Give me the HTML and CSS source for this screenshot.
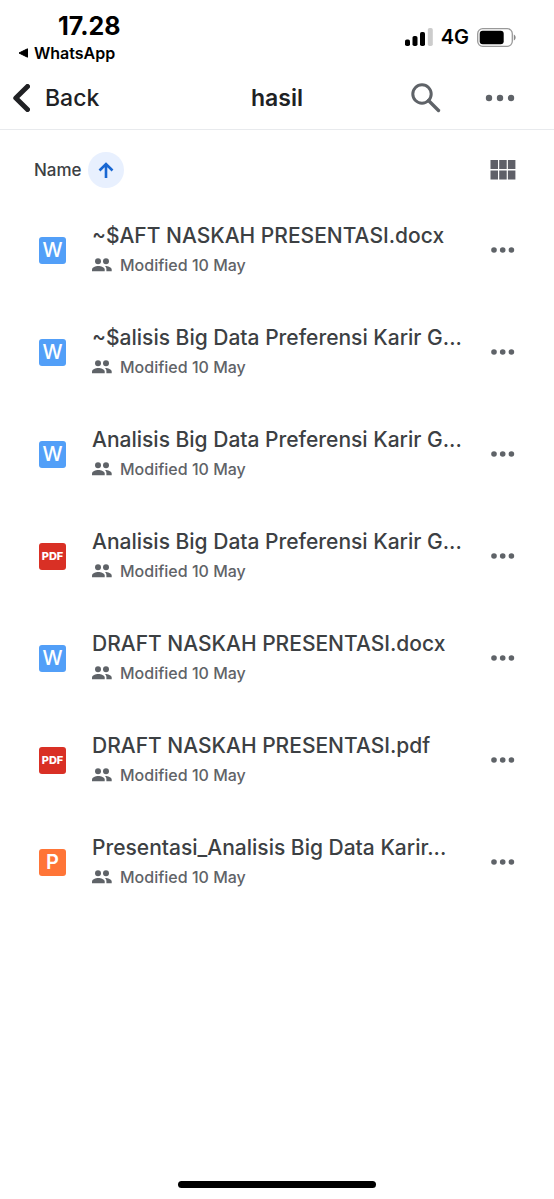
FILE: index.html
```html
<!DOCTYPE html>
<html lang="id">
<head>
<meta charset="utf-8">
<meta name="viewport" content="width=device-width, initial-scale=1">
<title>hasil</title>
<link rel="stylesheet" href="styles.css">
</head>
<body>
<svg class="sprite" aria-hidden="true">
  <symbol id="dots" viewBox="0 0 24 6"><circle cx="3" cy="3" r="2.8"/><circle cx="11.7" cy="3" r="2.8"/><circle cx="20.4" cy="3" r="2.8"/></symbol>
  <symbol id="people" viewBox="0 0 20 14"><circle cx="6" cy="3.2" r="3"/><circle cx="14" cy="3.2" r="3"/><path d="M0 13.2v-1.7C0 9.200 3.600 8 6.300 8s6.400 1.200 6.400 3.500v1.700z"/><path d="M13 8.100c3 .1 6.700 1.200 6.700 3.400v1.700h-5.300v-1.700c0-1.500-.5-2.600-1.400-3.400z"/></symbol>
</svg>
<div class="screen">
  <div class="status">
    <div class="status-left">
      <div class="clock">17.28</div>
      <a class="return" href="#"><svg width="10" height="10" viewBox="0 0 10 10"><path d="M9.500.8v8.400L1 5z" stroke="#000" stroke-linejoin="round"/></svg>WhatsApp</a>
    </div>
    <div class="status-right">
      <svg width="28" height="18" viewBox="0 0 28 18"><rect x="0" y="11.500" width="5" height="6.500" rx="1.800"/><rect x="7.500" y="8" width="5" height="10" rx="1.800"/><rect x="15" y="4" width="5" height="14" rx="1.800"/><rect x="22.800" y="0" width="5" height="18" rx="1.800" fill="#ccc"/></svg>
      <span class="network">4G</span>
      <svg width="39" height="19" viewBox="0 0 39 19"><rect x=".7" y=".7" width="34.600" height="17.600" rx="5" fill="none" stroke="#999" stroke-width="1.300"/><rect x="2.700" y="2.700" width="24" height="13.600" rx="3"/><path d="M36.800 6.500c2.400 1 2.400 5 0 6z" fill="#888"/></svg>
    </div>
  </div>
  <header class="nav">
    <button class="back" type="button"><svg width="18" height="28" viewBox="0 0 18 28"><path d="M15.500 2.500 3.800 14l11.700 11.500" fill="none" stroke="#202124" stroke-width="5" stroke-linecap="round" stroke-linejoin="round"/></svg>Back</button>
    <h1 class="title">hasil</h1>
    <div class="nav-actions">
      <button type="button" aria-label="Search"><svg width="30" height="30" viewBox="0 0 30 30" fill="none" stroke="#5f6368" stroke-width="3"><circle cx="11" cy="11" r="9.200"/><path d="m17.500 17.500 10 10" stroke-width="3.400" stroke-linecap="round"/></svg></button>
      <button type="button" aria-label="More actions"><svg width="30" height="8" viewBox="0 0 30 8" fill="#5f6368"><circle cx="4" cy="4" r="3.200"/><circle cx="15" cy="4" r="3.200"/><circle cx="26" cy="4" r="3.200"/></svg></button>
    </div>
  </header>
  <main>
    <div class="toolbar">
      <button class="sort" type="button">Name<span class="direction"><svg width="16" height="16" viewBox="0 0 16 16"><path d="M8 16V2M1.500 8.500 8 2l6.500 6.500" fill="none" stroke="#1967d2" stroke-width="2.600"/></svg></span></button>
      <button class="view" type="button" aria-label="Grid view"><svg width="26" height="20" viewBox="0 0 26 20" fill="#5f6068"><path d="M.5 0H8v9H.5zM9.200 0h7.500v9H9.200zM17.900 0h7.500v9h-7.500zM.5 10.500H8v9H.5zM9.200 10.500h7.500v9H9.200zM17.900 10.500h7.500v9h-7.500z"/></svg></button>
    </div>
    <ul class="files">
      <li class="file"><span class="kind word">W</span><div class="info"><div class="name">~$AFT NASKAH PRESENTASI.docx</div><div class="meta"><svg class="people"><use href="#people"/></svg>Modified 10 May</div></div><button class="more" type="button" aria-label="More"><svg><use href="#dots"/></svg></button></li>
      <li class="file"><span class="kind word">W</span><div class="info"><div class="name">~$alisis Big Data Preferensi Karir G...</div><div class="meta"><svg class="people"><use href="#people"/></svg>Modified 10 May</div></div><button class="more" type="button" aria-label="More"><svg><use href="#dots"/></svg></button></li>
      <li class="file"><span class="kind word">W</span><div class="info"><div class="name">Analisis Big Data Preferensi Karir G...</div><div class="meta"><svg class="people"><use href="#people"/></svg>Modified 10 May</div></div><button class="more" type="button" aria-label="More"><svg><use href="#dots"/></svg></button></li>
      <li class="file"><span class="kind pdf">PDF</span><div class="info"><div class="name">Analisis Big Data Preferensi Karir G...</div><div class="meta"><svg class="people"><use href="#people"/></svg>Modified 10 May</div></div><button class="more" type="button" aria-label="More"><svg><use href="#dots"/></svg></button></li>
      <li class="file"><span class="kind word">W</span><div class="info"><div class="name">DRAFT NASKAH PRESENTASI.docx</div><div class="meta"><svg class="people"><use href="#people"/></svg>Modified 10 May</div></div><button class="more" type="button" aria-label="More"><svg><use href="#dots"/></svg></button></li>
      <li class="file"><span class="kind pdf">PDF</span><div class="info"><div class="name">DRAFT NASKAH PRESENTASI.pdf</div><div class="meta"><svg class="people"><use href="#people"/></svg>Modified 10 May</div></div><button class="more" type="button" aria-label="More"><svg><use href="#dots"/></svg></button></li>
      <li class="file"><span class="kind slides">P</span><div class="info"><div class="name">Presentasi_Analisis Big Data Karir...</div><div class="meta"><svg class="people"><use href="#people"/></svg>Modified 10 May</div></div><button class="more" type="button" aria-label="More"><svg><use href="#dots"/></svg></button></li>
    </ul>
  </main>
  <div class="home"></div>
</div>
</body>
</html>
```
FILE: styles.css
```css
* { box-sizing: border-box; }
body { margin: 0; background: #fff; color: #3c4043; font-family: Inter, "Liberation Sans", sans-serif; }
button { display: flex; align-items: center; border: 0; padding: 0; background: none; color: inherit; font: inherit; cursor: pointer; }
svg { display: block; flex: none; }
.sprite { position: absolute; width: 0; height: 0; }
.screen { display: flex; flex-direction: column; min-height: 100vh; }

.status { display: flex; justify-content: space-between; padding: 12px 38px 0 18px; color: #000; }
.clock { padding-left: 40px; font-size: 25px; line-height: 28px; font-weight: 700; }
.return { display: flex; align-items: center; gap: 6px; color: #000; font-size: 16px; line-height: 26px; font-weight: 600; text-decoration: none; }
.status-right { display: flex; align-items: center; align-self: flex-start; gap: 8px; padding-top: 12px; }
.network { font-size: 20px; line-height: 26px; font-weight: 600; }

.nav { display: grid; grid-template-columns: 1fr auto 1fr; align-items: center; height: 64px; padding: 0 39px 0 12px; border-bottom: 1px solid #e8eaed; color: #202124; }
.back { gap: 15px; font-size: 23px; font-weight: 500; justify-self: start; }
.title { margin: 0; padding-left: 27px; font-size: 23px; font-weight: 600; }
.nav-actions { display: flex; align-items: center; justify-content: flex-end; gap: 44px; }

.toolbar { display: flex; align-items: center; justify-content: space-between; height: 80px; padding: 0 38px 0 34px; }
.sort { gap: 6px; font-size: 17px; font-weight: 500; }
.direction { display: grid; place-items: center; width: 36px; height: 36px; border-radius: 50%; background: #e8f0fe; }

.files { margin: -11px 0 0; padding: 0; list-style: none; }
.file { display: flex; align-items: center; height: 102px; padding: 0 39px; }
.kind { display: grid; place-items: center; flex: none; width: 27px; height: 27px; margin-right: 26px; border-radius: 3px; color: #fff; font-size: 20px; line-height: 27px; font-weight: 500; }
.word { background: #529ff8; }
.slides { background: #ff7537; font-weight: 600; }
.pdf { background: #d93025; font-size: 11px; font-weight: 800; }
.info { flex: 1; min-width: 0; }
.name { overflow: hidden; font-size: 21px; line-height: 30px; font-weight: 500; white-space: nowrap; text-overflow: ellipsis; }
.meta { display: flex; align-items: center; gap: 8px; color: #5f6368; font-size: 16px; line-height: 28px; font-weight: 500; }
.people { width: 20px; height: 14px; fill: #5f6368; }
.more svg { width: 24px; height: 6px; fill: #5f6368; }

.home { width: 198px; height: 7px; margin: auto auto 11px; border-radius: 4px; background: #000; }
```
